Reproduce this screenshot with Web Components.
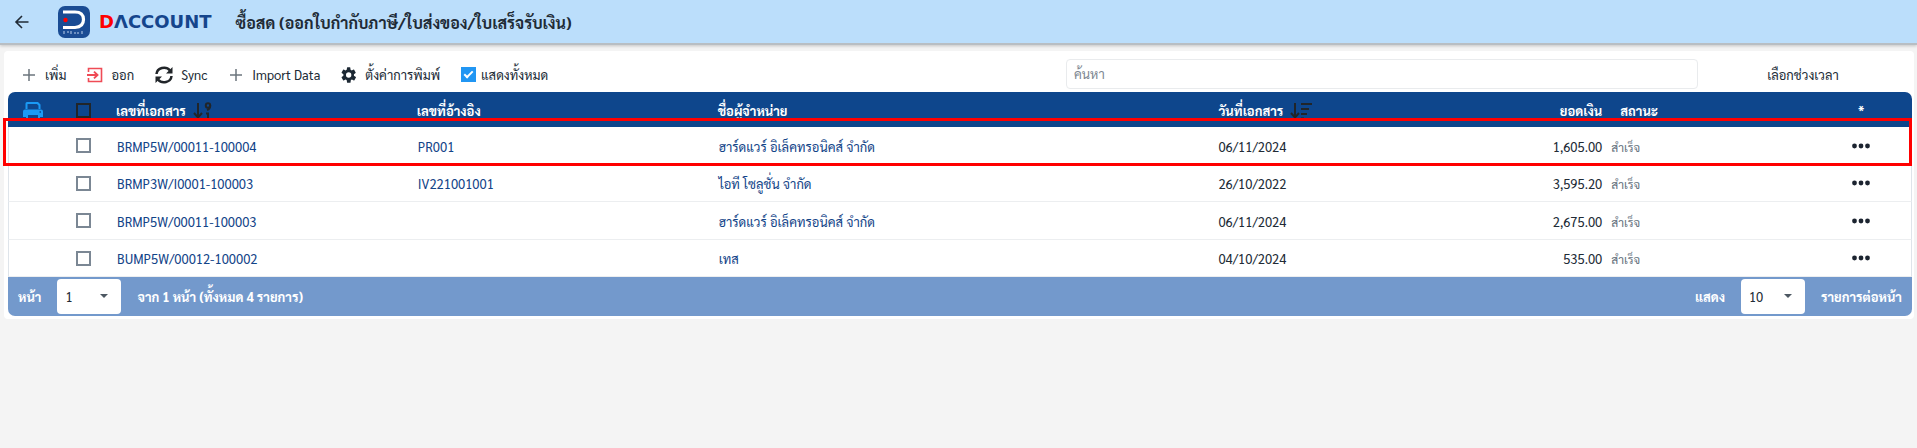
<!DOCTYPE html>
<html lang="th">
<head>
<meta charset="utf-8">
<title>DACCOUNT</title>
<style>
body {
    margin: 0;
    background: #f4f4f4;
    color: #212b36;
    font-family: Sarabun, "Noto Sans Thai Looped", "Noto Sans", sans-serif;
    font-size: 13px;
    line-height: 20px;
}
</style>
</head>
<body>
<app-header>ซื้อสด (ออกใบกำกับภาษี/ใบส่งของ/ใบเสร็จรับเงิน)</app-header>
<page-card>
    <tool-bar>
        <tool-button icon="plus">เพิ่ม</tool-button>
        <tool-button icon="exit">ออก</tool-button>
        <tool-button icon="sync">Sync</tool-button>
        <tool-button icon="plus">Import Data</tool-button>
        <tool-button icon="gear">ตั้งค่าการพิมพ์</tool-button>
    </tool-bar>
    <doc-table></doc-table>
    <table-pager></table-pager>
</page-card>

<script>
const icons = {
    plus: '<svg width="16" height="16" viewBox="0 0 16 16"><path d="M8 2v12M2 8h12" stroke="#6c757d" stroke-width="1.5"/></svg>',
    exit: '<svg width="16" height="16" viewBox="0 0 16 16" fill="none" stroke="#ef4b56" stroke-width="1.6"><path d="M1.500 5V1.500h13v13h-13V11"/><path d="M0 8h10M7 4.600l3.500 3.400L7 11.400" stroke-width="1.900"/></svg>',
    sync: '<svg width="18" height="18" viewBox="0 0 18 18" fill="none" stroke="#212529" stroke-width="2.500"><path d="M1.500 8A7.500 6.800 0 0 1 15 4.500M16.500 10A7.500 6.800 0 0 1 3 13.500"/><path d="M17.500 1v6.500H11zM.5 17v-6.500H7z" fill="#212529" stroke="none"/></svg>',
    gear: '<svg width="16" height="16" viewBox="0 0 24 24"><path fill="#1c2833" d="M19.400 13a7.500 7.500 0 0 0 0-2l2.500-2a.7.7 0 0 0 .1-.8l-2.300-4a.7.7 0 0 0-.8-.3l-2.900 1.200a8 8 0 0 0-1.700-1L13.900.9a.7.7 0 0 0-.7-.6H9.800a.7.7 0 0 0-.7.6l-.5 3.200a8 8 0 0 0-1.700 1L4 3.900a.7.7 0 0 0-.8.3l-2.300 4a.7.7 0 0 0 .2.800l2.500 2a8 8 0 0 0 0 2l-2.500 2a.7.7 0 0 0-.2.800l2.300 4c.2.300.5.400.8.300l2.900-1.200a8 8 0 0 0 1.700 1l.5 3.200c0 .3.300.600.7.600h3.800c.4 0 .7-.3.7-.6l.4-3.200a8 8 0 0 0 1.700-1l2.900 1.200c.3.100.6 0 .8-.3l2.300-4a.7.7 0 0 0-.1-.8zM11.500 16a4 4 0 1 1 0-8 4 4 0 0 1 0 8z"/></svg>',
    back: '<svg width="16" height="16" viewBox="0 0 16 16" fill="none" stroke="#212b36" stroke-width="1.600"><path d="M14.500 8H2.500M8 2L2 8l6 6"/></svg>',
    printer: '<svg width="20" height="18" viewBox="0 0 20 18" fill="#1a9af5"><path d="M2.500 7V1.500Q2.500 0 4 0h11l2.500 2.500V7h-2V3.500L14 2H4.500v5z"/><path d="M2 7.500h16q2 0 2 2V15h-3v3H3v-3H0V9.500q0-2 2-2zM5 13v3h10v-3zM16.500 9.300v1.500H18V9.300z" fill-rule="evenodd"/></svg>',
    sortNum: '<svg width="20" height="18" viewBox="0 0 20 18" fill="none" stroke="#212529" stroke-width="2"><path d="M5 1v13M1 11l4 4.500L9 11"/><circle cx="15" cy="3.500" r="2.200"/><path d="M17.200 3.500Q17.200 7 14 8M13 11.500h2V17M13 17h5"/></svg>',
    sortDesc: '<svg width="22" height="18" viewBox="0 0 22 18" fill="none" stroke="#212529" stroke-width="2"><path d="M5 1v13M1 11l4 4.500L9 11M11 2h11M11 7h8M11 12h6M11 16.500h3"/></svg>',
    dots: '<svg width="18" height="6" viewBox="0 0 18 6" fill="#1c2430"><circle cx="2.500" cy="3" r="2.400"/><circle cx="9" cy="3" r="2.400"/><circle cx="15.500" cy="3" r="2.400"/></svg>'
}

// blue rounded mark with the white D and the red dot
const mark = `
<svg width="32" height="32" viewBox="0 0 32 32" fill="none">
    <rect width="32" height="32" rx="7" fill="#1a4c94"/>
    <path d="M5 6h12q8.500 0 8.500 7.500T17 21.500H5" stroke="#fff" stroke-width="3.200"/>
    <circle cx="7.500" cy="14" r="2.200" fill="#f00"/>
    <path d="M6 28v-3M9 26h2M13 28v-3M16 27h2M20 26v2M24 25v3" stroke="#bcd0ec"/>
</svg>`

const checkCss = `
input[type=checkbox] {
    appearance: none;
    display: block;
    box-sizing: border-box;
    width: 15px;
    height: 15px;
    margin: 0;
    border: 2px solid var(--check-line, #7b8794);
    background: transparent;
}
`

class AppHeader extends HTMLElement {
    constructor() {
        super()
        this.attachShadow({mode: 'open'}).innerHTML = `
        <style>
        :host {
            display: flex;
            align-items: center;
            height: 43px;
            padding: 0 14px;
            background: #bbdefb;
            border-bottom: 2px solid #b8bec3;
            box-shadow: 0 1px 3px #0003;
        }
        button { display: flex; padding: 0; border: 0; background: none; margin-right: 28px; }
        .name {
            margin: 0 24px 0 9px;
            color: #15458c;
            font: 700 18px/24px "DejaVu Sans", sans-serif;
        }
        .name b { color: #f00; }
        h1 { margin: 0; padding-top: 2px; font-size: 16px; line-height: 24px; font-weight: 700; }
        svg { display: block; }
        </style>
        <button aria-label="กลับ">${icons.back}</button>
        ${mark}
        <span class="name"><b>D</b>ΛCCOUNT</span>
        <h1><slot></slot></h1>`
    }
}

class PageCard extends HTMLElement {
    constructor() {
        super()
        this.attachShadow({mode: 'open'}).innerHTML = `
        <style>
        :host {
            display: block;
            margin: 6px 3px 0 4px;
            padding: 0 2px 3px 4px;
            background: #fff;
            border-radius: 4px;
        }
        </style>
        <slot></slot>`
    }
}

class ToolBar extends HTMLElement {
    constructor() {
        super()
        this.attachShadow({mode: 'open'}).innerHTML = `
        <style>
        ${checkCss}
        :host { display: grid; grid-template-columns: 1058px 1fr 214px; align-items: center; height: 41px; }
        .tools { display: flex; align-items: center; gap: 21px; padding: 6px 0 0 13px; }
        .all { display: flex; align-items: center; gap: 5px; }
        .all input { position: relative; border: 0; background: #2196f3; }
        .all input::after {
            content: "";
            position: absolute;
            left: 5px;
            top: 2px;
            width: 3px;
            height: 7px;
            border: solid #fff;
            border-width: 0 2px 2px 0;
            transform: rotate(45deg);
        }
        .search {
            box-sizing: border-box;
            width: 100%;
            height: 30px;
            margin-top: 4px;
            padding: 0 7px;
            border: 1px solid #e9ebed;
            border-radius: 4px;
            font: inherit;
        }
        .search::placeholder { color: #7d8791; }
        .range { justify-self: center; padding: 6px 4px 0 0; border: 0; background: none; color: inherit; font: inherit; }
        </style>
        <div class="tools">
            <slot></slot>
            <label class="all"><input type="checkbox" checked>แสดงทั้งหมด</label>
        </div>
        <input class="search" type="text" placeholder="ค้นหา" aria-label="ค้นหา">
        <button class="range">เลือกช่วงเวลา</button>`
    }
}

class ToolButton extends HTMLElement {
    constructor() {
        super()
        this.attachShadow({mode: 'open'})
    }

    connectedCallback() {
        this.shadowRoot.innerHTML = `
        <style>
        :host { display: block; }
        button {
            display: flex;
            align-items: center;
            gap: 8px;
            padding: 0;
            border: 0;
            background: none;
            color: inherit;
            font: inherit;
        }
        </style>
        <button>${icons[this.getAttribute('icon')]}<slot></slot></button>`
    }
}

const docs = [
    ['BRMP5W/00011-100004', 'PR001', 'ฮาร์ดแวร์ อิเล็คทรอนิคส์ จำกัด', '06/11/2024', '1,605.00'],
    ['BRMP3W/I0001-100003', 'IV221001001', 'ไอที โซลูชั่น จำกัด', '26/10/2022', '3,595.20'],
    ['BRMP5W/00011-100003', '', 'ฮาร์ดแวร์ อิเล็คทรอนิคส์ จำกัด', '06/11/2024', '2,675.00'],
    ['BUMP5W/00012-100002', '', 'เทส', '04/10/2024', '535.00']
]

class DocTable extends HTMLElement {
    constructor() {
        super()
        this.attachShadow({mode: 'open'}).innerHTML = `
        <style>
        ${checkCss}
        :host { display: block; }
        table { width: 100%; table-layout: fixed; border-collapse: separate; border-spacing: 0; }
        th, td { box-sizing: border-box; height: 37px; padding: 2px 8px 0; text-align: left; white-space: nowrap; }
        tr:nth-child(odd) td { height: 38px; }
        thead { --check-line: #212529; }
        thead th { height: 35px; background: #0e468c; color: #fff; font-weight: 700; }
        th:first-child { border-top-left-radius: 7px; }
        th:last-child { border-top-right-radius: 7px; }
        td { border-bottom: 1px solid #eceef0; }
        td:first-child { border-left: 1px solid #dee4ea; }
        td:last-child { border-right: 1px solid #dee4ea; }
        a { padding-left: 1px; color: #124488; text-decoration: none; }
        .head { display: flex; align-items: center; gap: 7px; }
        .num { text-align: right; }
        td.status { padding-left: 1px; color: #66727e; font-size: 12px; }
        th.status { padding-left: 10px; }
        .mid { text-align: center; }
        .mid input { margin: 0 auto; }
        td.mid { padding-top: 0; }
        td button { display: block; margin: 0 auto; padding: 0; border: 0; background: none; }
        svg { display: block; }
        th.mid svg { margin: 0 auto; }
        /* red frame round the picked row, reaching over the head */
        .picked { position: relative; }
        .frame {
            position: absolute;
            inset: -9px 0 -1px -5px;
            border: 3px solid #f00;
            pointer-events: none;
        }
        </style>
        <table>
            <colgroup>
                <col style="width: 50px"><col style="width: 50px">
                <col style="width: 15.8%"><col style="width: 15.8%"><col style="width: 26.3%">
                <col style="width: 10.5%"><col style="width: 10.5%"><col style="width: 10.5%"><col>
            </colgroup>
            <thead>
                <tr>
                    <th class="mid">${icons.printer}</th>
                    <th class="mid"><input type="checkbox" aria-label="เลือกทั้งหมด"></th>
                    <th><span class="head">เลขที่เอกสาร ${icons.sortNum}</span></th>
                    <th>เลขที่อ้างอิง</th>
                    <th>ชื่อผู้จำหน่าย</th>
                    <th><span class="head">วันที่เอกสาร ${icons.sortDesc}</span></th>
                    <th class="num">ยอดเงิน</th>
                    <th class="status">สถานะ</th>
                    <th class="mid">*</th>
                </tr>
            </thead>
            <tbody>${docs.map((d, i) => `
                <tr${i == 0 ? ' class="picked"' : ''}>
                    <td>${i == 0 ? '<div class="frame"></div>' : ''}</td>
                    <td class="mid"><input type="checkbox" aria-label="${d[0]}"></td>
                    <td><a href="#">${d[0]}</a></td>
                    <td>${d[1] ? `<a href="#">${d[1]}</a>` : ''}</td>
                    <td><a href="#">${d[2]}</a></td>
                    <td>${d[3]}</td>
                    <td class="num">${d[4]}</td>
                    <td class="status">สำเร็จ</td>
                    <td class="mid"><button aria-label="เมนู">${icons.dots}</button></td>
                </tr>`).join('')}
            </tbody>
        </table>`
    }
}

class TablePager extends HTMLElement {
    constructor() {
        super()
        this.attachShadow({mode: 'open'}).innerHTML = `
        <style>
        :host {
            display: flex;
            align-items: center;
            justify-content: space-between;
            height: 39px;
            padding: 0 10px;
            background: #7399cc;
            border-radius: 0 0 7px 7px;
            color: #fff;
            font-weight: 700;
        }
        div, label { display: flex; align-items: center; gap: 16px; }
        .box { position: relative; display: flex; }
        .box::after {
            content: "";
            position: absolute;
            right: 13px;
            top: 15px;
            border: 4px solid transparent;
            border-top-color: #4d5862;
            pointer-events: none;
        }
        select {
            appearance: none;
            width: 64px;
            height: 35px;
            padding: 0 8px;
            border: 0;
            border-radius: 4px;
            background: #fff;
            color: #212b36;
            font: inherit;
            font-weight: 400;
        }
        </style>
        <div><label>หน้า <span class="box"><select><option>1</option></select></span></label> <span>จาก 1 หน้า (ทั้งหมด 4 รายการ)</span></div>
        <div><label>แสดง <span class="box"><select><option>10</option></select></span></label> <span>รายการต่อหน้า</span></div>`
    }
}

customElements.define('app-header', AppHeader)
customElements.define('page-card', PageCard)
customElements.define('tool-bar', ToolBar)
customElements.define('tool-button', ToolButton)
customElements.define('doc-table', DocTable)
customElements.define('table-pager', TablePager)
</script>
</body>
</html>
